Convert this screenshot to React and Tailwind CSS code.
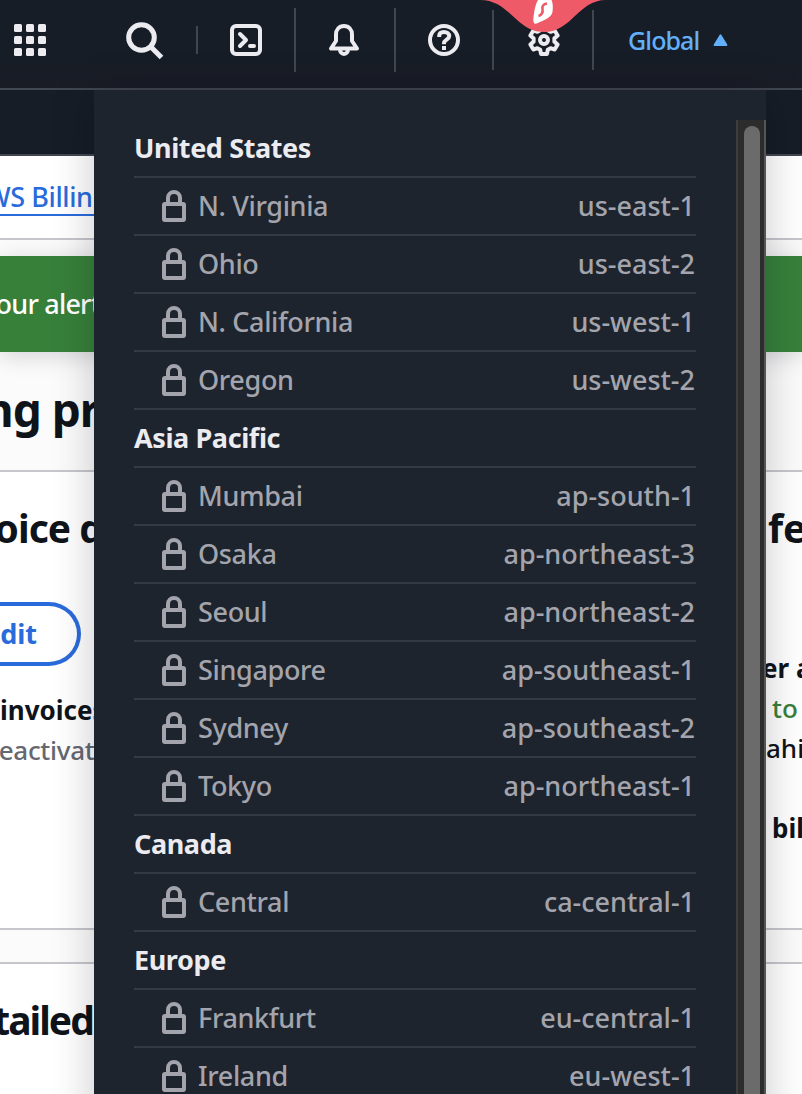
import React from 'react';

const groups = [
  {
    name: 'United States',
    rows: [
      ['N. Virginia', 'us-east-1'],
      ['Ohio', 'us-east-2'],
      ['N. California', 'us-west-1'],
      ['Oregon', 'us-west-2'],
    ],
  },
  {
    name: 'Asia Pacific',
    rows: [
      ['Mumbai', 'ap-south-1'],
      ['Osaka', 'ap-northeast-3'],
      ['Seoul', 'ap-northeast-2'],
      ['Singapore', 'ap-southeast-1'],
      ['Sydney', 'ap-southeast-2'],
      ['Tokyo', 'ap-northeast-1'],
    ],
  },
  { name: 'Canada', rows: [['Central', 'ca-central-1']] },
  {
    name: 'Europe',
    rows: [
      ['Frankfurt', 'eu-central-1'],
      ['Ireland', 'eu-west-1'],
    ],
  },
];

const gearPoints = [30, 90, 150, 210, 270, 330]
  .flatMap((a) => [[10.5, a - 21], [14.3, a - 12], [14.3, a + 12], [10.5, a + 21]])
  .map(([r, a]) => {
    const t = (a * Math.PI) / 180;
    return `${(16 + r * Math.cos(t)).toFixed(2)},${(16 + r * Math.sin(t)).toFixed(2)}`;
  })
  .join(' ');

function Lock() {
  return (
    <svg className="h-8 w-6 shrink-0" viewBox="0 0 24 32" fill="none" stroke="#a4a4ad" strokeWidth="4" strokeLinejoin="round">
      <rect x="2" y="14" width="20" height="16" rx="1" />
      <path d="M6 14V8a6 6 0 0 1 12 0v6" />
    </svg>
  );
}

function Icon({ children, className }) {
  return (
    <svg className={`h-8 w-8 shrink-0 ${className || ''}`} viewBox="0 0 32 32" fill="none" stroke="#ebebf0" strokeWidth="4" strokeLinejoin="round">
      {children}
    </svg>
  );
}

function Header() {
  return (
    <header className="flex h-[90px] items-start border-b-2 border-[#424650] bg-linear-to-b from-[#161d26] from-60% to-[#1a1c26]">
      <div className="mt-6 ml-3.5 grid grid-cols-3 gap-1">
        {[0, 1, 2, 3, 4, 5, 6, 7, 8].map((i) => (
          <span key={i} className="size-2 rounded-[1.5px] bg-[#ebebf0]" />
        ))}
      </div>
      <svg className="mt-[21px] ml-20 h-[39px] w-[39px]" viewBox="0 0 39 39" fill="none" stroke="#ebebf0">
        <circle cx="15.5" cy="16.5" r="12.8" strokeWidth="5" />
        <path d="M25 26L35.500 36.500" strokeWidth="5.2" />
      </svg>
      <span className="mt-[26px] ml-[31px] h-7 w-0.5 bg-[#424650]" />
      <Icon className="mt-6 ml-8">
        <rect x="2" y="2" width="28" height="28" rx="4" />
        <path d="M10 10l6 6-6 6M20 22h4" strokeLinecap="round" />
      </Icon>
      <span className="mt-2 ml-8 h-16 w-0.5 bg-[#424650]" />
      <Icon className="mt-6 ml-8">
        <path d="M16 2c-5 0-8 3.800-8 8.500V17l-5 7.500h26L24 17v-6.500C24 5.800 21 2 16 2z" />
        <path d="M12 25c0 3 1.500 5 4 5s4-2 4-5" />
      </Icon>
      <span className="mt-2 ml-[34px] h-16 w-0.5 bg-[#424650]" />
      <Icon className="mt-6 ml-8">
        <circle cx="16" cy="16" r="14" />
        <path d="M11.200 13V12C11.200 9.300 13 8 16 8s5.200 1.500 5.200 4.200c0 3.300-5.200 3.600-5.200 7v1" />
        <path d="M16 22v4" />
      </Icon>
      <span className="mt-2.5 ml-8 h-[60px] w-0.5 bg-[#424650]" />
      <Icon className="mt-6 ml-[34px]">
        <polygon points={gearPoints} />
        <circle cx="16" cy="16" r="4" />
      </Icon>
      <span className="mt-2.5 ml-8 h-[60px] w-0.5 bg-[#424650]" />
      <span className="mt-[22px] ml-[34px] w-[85px] text-[25px] leading-9 font-medium tracking-[-0.9px] text-[#62b0fb]">Global</span>
      <svg className="mt-[33px] h-[14px] w-[15px]" viewBox="0 0 15 14">
        <path d="M7.500 2.300L13.500 12H1.500z" fill="#62b0fb" stroke="#62b0fb" strokeWidth="1.800" strokeLinejoin="round" />
      </svg>
    </header>
  );
}

function Page() {
  return (
    <main className="bg-white whitespace-nowrap text-[#0f141a]">
      <div className="h-[66px] border-b-2 border-[#424650] bg-[#161d26]" />
      <div className="flex h-[84px] items-start border-b-2 border-[#c6c6cd] text-[27px] font-medium tracking-[-0.4px] text-[#2a6bdb]">
        <span className="mt-[22px] -ml-[31px] h-[38px] border-b-2 border-[#2a6bdb] leading-[38px]">AWS Billing</span>
      </div>
      <div className="h-4 bg-[#fbfbfb]" />
      <div className="relative flex h-24 items-center bg-[#37803a] text-[27px] font-medium tracking-[-0.8px] text-white shadow-[0_4px_22px_rgba(0,7,22,0.16)]">
        <span className="-ml-[18px]">Your alert</span>
      </div>
      <div className="flex h-[120px] items-center border-b-2 border-[#c6c6cd] bg-[#fbfbfb] text-[46px] font-bold tracking-[-1px]">
        <span className="-ml-[29px] pb-1">ing pr</span>
      </div>
      <div className="flex h-[458px] border-b-2 border-[#c6c6cd]">
        <section className="w-[762px] shrink-0">
          <h2 className="mt-[28px] -ml-[51px] text-[39px] leading-[56px] font-bold tracking-[-1px]">nvoice d</h2>
          <div className="mt-[46px] flex h-16 w-[81px] items-center justify-end rounded-r-full border-4 border-l-0 border-[#2a6bdb] pr-10 text-[27px] font-bold text-[#2a6bdb]">Edit</div>
          <p className="mt-6 text-[26px] leading-10 font-bold">invoices</p>
          <p className="-ml-5 text-[26px] leading-10 font-medium tracking-[-0.3px] text-[#656871]">Deactivated</p>
        </section>
        <section className="text-[26px] leading-10">
          <h2 className="mt-[28px] ml-1.5 text-[39px] leading-[56px] font-bold">fer</h2>
          <p className="mt-[92px] font-bold">er ad</p>
          <p className="ml-2.5 font-medium text-[#37803a]">to</p>
          <p className="ml-1 font-medium">ahi</p>
          <p className="mt-10 ml-2.5 font-bold">bill</p>
        </section>
      </div>
      <div className="h-[34px] border-b-2 border-[#c6c6cd] bg-[#fbfbfb]" />
      <h2 className="mt-[28px] -ml-[28px] text-[39px] leading-[56px] font-bold tracking-[-2px]">etailed</h2>
    </main>
  );
}

function RegionMenu() {
  return (
    <div className="absolute top-[90px] left-[94px] flex h-[1100px] w-[672px] bg-[#1d242e] pt-[30px] shadow-[0_4px_40px_rgba(0,7,22,0.22)]">
      <div className="ml-10 w-[562px]">
        {groups.map((g) => (
          <div key={g.name}>
            <h3 className="flex h-[58px] items-center border-b-2 border-[#353943] text-[27px] font-bold tracking-[-0.4px] text-[#ebebf0]">{g.name}</h3>
            {g.rows.map(([city, code]) => (
              <div key={code} className="flex h-[58px] items-center border-b-2 border-[#353943] pr-px pl-7 text-[27px] font-medium text-[#a4a4ad]">
                <Lock />
                <span className="ml-3 tracking-[-0.35px]">{city}</span>
                <span className="ml-auto">{code}</span>
              </div>
            ))}
          </div>
        ))}
      </div>
      <div className="ml-10 flex w-[30px] border-r-2 border-l-2 border-r-[#555555] border-l-[#3d3d3d] bg-[#2c2c2c] pt-1.5 pl-1.5">
        <div className="w-4 rounded-t-full bg-[#6b6b6b]" />
      </div>
    </div>
  );
}

function ShieldTab() {
  return (
    <svg className="absolute top-0 left-[480px] h-8 w-[128px]" viewBox="0 0 128 32">
      <path d="M0 0H126C98 0 92 32 64 32C36 32 30 0 0 0Z" fill="#ee5a67" />
      <path d="M58 0H71.500C73 3 73 8 72.500 12C71.500 18 64 20 56 23.800C53.500 24.200 53 21 53.500 17C54.300 11 55.500 4 58 0Z" fill="#fff" />
      <path d="M67 3.500C63.500 4 62 6 62.500 9C63 12 62 15 58.500 16" fill="none" stroke="#ee5a67" strokeWidth="2.600" />
    </svg>
  );
}

export default function App() {
  return (
    <div className="relative h-[1094px] w-[802px] overflow-hidden bg-white font-['Noto_Sans',sans-serif]">
      <Header />
      <Page />
      <RegionMenu />
      <ShieldTab />
    </div>
  );
}
